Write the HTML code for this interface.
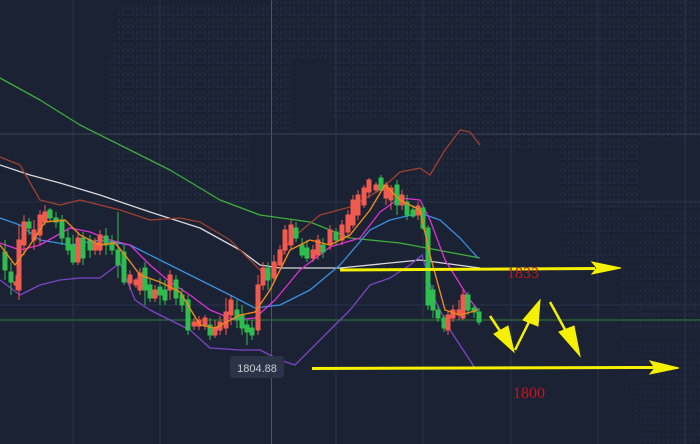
<!DOCTYPE html>
<html><head><meta charset="utf-8"><style>
html,body{margin:0;padding:0;background:#1b2234;width:700px;height:444px;overflow:hidden}
svg{display:block}
</style></head><body>
<svg width="700" height="444" viewBox="0 0 700 444" xmlns="http://www.w3.org/2000/svg">
<defs>
<pattern id="dots" width="4.5" height="6" patternUnits="userSpaceOnUse"><rect x="1" y="1" width="2" height="3" fill="#222a3e"/></pattern>
</defs>
<rect width="700" height="444" fill="#1b2234"/>
<path d="M120 5 H330 V60 H290 V130 H250 V200 H110 V60 Z" fill="url(#dots)"/>
<path d="M270 0 H700 V140 H640 V200 H560 V150 H480 V200 H400 V120 H330 V40 H270 Z" fill="url(#dots)"/>
<path d="M560 200 H700 V330 H620 V260 H560 Z" fill="url(#dots)" opacity="0.7"/>
<path d="M620 340 H700 V444 H640 Z" fill="url(#dots)" opacity="0.6"/>
<g stroke="#29334a" stroke-width="1">
<line x1="73" y1="0" x2="73" y2="444"/><line x1="160" y1="0" x2="160" y2="444"/>
<line x1="336" y1="0" x2="336" y2="444"/><line x1="423" y1="0" x2="423" y2="444"/>
<line x1="511" y1="0" x2="511" y2="444"/><line x1="598" y1="0" x2="598" y2="444"/>
<line x1="685" y1="0" x2="685" y2="444"/>
<line x1="0" y1="202" x2="700" y2="202"/><line x1="0" y1="305" x2="700" y2="305"/>
</g>
<line x1="271.5" y1="0" x2="271.5" y2="444" stroke="#4a556c"/>
<line x1="0" y1="134" x2="700" y2="134" stroke="#394358"/>
<line x1="0" y1="320" x2="700" y2="320" stroke="#2e6b3a" stroke-width="1.2"/>
<g fill="none" stroke-width="1.3" stroke-linejoin="round">
<polyline stroke="#3fae3a" points="0,78 40,100 80,125 130,150 170,170 220,200 260,215 310,222 350,238 400,243 480,258"/>
<polyline stroke="#d8d8dc" points="0,165 30,175 60,183 100,195 150,212 200,228 240,250 260,265 280,268 340,268 400,262 420,260 480,268"/>
<polyline stroke="#a0402e" points="0,157 20,165 40,200 60,205 80,200 100,205 120,210 150,220 180,218 200,222 230,240 260,270 272,275 290,240 320,215 350,207 380,190 400,172 420,168 430,175 445,150 460,130 470,132 480,145"/>
<polyline stroke="#7d45c8" points="0,280 20,295 40,285 60,280 80,278 100,278 120,263 135,300 150,310 170,320 190,330 210,348 240,350 260,350 280,360 295,365 320,340 350,310 370,285 390,278 410,265 422,255 435,300 450,330 475,368"/>
<polyline stroke="#3a8fe0" points="0,218 20,225 40,240 70,245 100,240 130,245 170,265 200,280 230,295 255,308 280,305 310,290 340,265 370,230 390,220 420,213 440,220 460,238 478,258"/>
<polyline stroke="#e030d8" points="0,243 20,250 40,245 70,228 90,232 110,240 130,245 150,265 170,282 190,295 210,310 235,320 255,318 275,300 300,270 330,247 360,238 380,212 400,198 420,200 430,220 445,260 470,300 478,310"/>
</g>
<g stroke-width="1">
<g fill="#2ebd4e" stroke="#2ebd4e">
<line x1="5" y1="240" x2="5" y2="280"/><rect x="3" y="252" width="4" height="18"/>
<line x1="11" y1="262" x2="11" y2="295"/><rect x="9" y="272" width="4" height="10"/>
<line x1="29" y1="218" x2="29" y2="235"/><rect x="27" y="222" width="4" height="6"/>
<line x1="50" y1="208" x2="50" y2="222"/><rect x="48" y="210" width="4" height="8"/>
<line x1="56" y1="212" x2="56" y2="228"/><rect x="54" y="218" width="4" height="4"/>
<line x1="62" y1="215" x2="62" y2="245"/><rect x="60" y="220" width="4" height="18"/>
<line x1="68" y1="230" x2="68" y2="255"/><rect x="66" y="238" width="4" height="12"/>
<line x1="73" y1="235" x2="73" y2="265"/><rect x="71" y="245" width="4" height="17"/>
<line x1="83" y1="232" x2="83" y2="265"/><rect x="81" y="238" width="4" height="20"/>
<line x1="90" y1="235" x2="90" y2="258"/><rect x="88" y="240" width="4" height="10"/>
<line x1="106" y1="228" x2="106" y2="255"/><rect x="104" y="236" width="4" height="9"/>
<line x1="112" y1="235" x2="112" y2="255"/><rect x="110" y="242" width="4" height="8"/>
<line x1="118" y1="212" x2="118" y2="278"/><rect x="116" y="250" width="4" height="15"/>
<line x1="124" y1="245" x2="124" y2="285"/><rect x="122" y="252" width="4" height="30"/>
<line x1="145" y1="262" x2="145" y2="305"/><rect x="143" y="268" width="4" height="22"/>
<line x1="150" y1="278" x2="150" y2="302"/><rect x="148" y="285" width="4" height="13"/>
<line x1="160" y1="278" x2="160" y2="305"/><rect x="158" y="287" width="4" height="8"/>
<line x1="165" y1="280" x2="165" y2="305"/><rect x="163" y="290" width="4" height="10"/>
<line x1="176" y1="275" x2="176" y2="305"/><rect x="174" y="280" width="4" height="18"/>
<line x1="182" y1="288" x2="182" y2="312"/><rect x="180" y="295" width="4" height="10"/>
<line x1="188" y1="295" x2="188" y2="335"/><rect x="186" y="300" width="4" height="30"/>
<line x1="210" y1="318" x2="210" y2="340"/><rect x="208" y="325" width="4" height="10"/>
<line x1="237" y1="300" x2="237" y2="328"/><rect x="235" y="310" width="4" height="10"/>
<line x1="242" y1="305" x2="242" y2="335"/><rect x="240" y="315" width="4" height="13"/>
<line x1="247" y1="320" x2="247" y2="345"/><rect x="245" y="325" width="4" height="7"/>
<line x1="252" y1="320" x2="252" y2="340"/><rect x="250" y="328" width="4" height="7"/>
<line x1="268" y1="262" x2="268" y2="290"/><rect x="266" y="268" width="4" height="12"/>
<line x1="296" y1="222" x2="296" y2="242"/><rect x="294" y="228" width="4" height="10"/>
<line x1="302" y1="238" x2="302" y2="258"/><rect x="300" y="245" width="4" height="10"/>
<line x1="307" y1="240" x2="307" y2="262"/><rect x="305" y="248" width="4" height="10"/>
<line x1="323" y1="238" x2="323" y2="258"/><rect x="321" y="245" width="4" height="7"/>
<line x1="336" y1="228" x2="336" y2="245"/><rect x="334" y="232" width="4" height="8"/>
<line x1="381" y1="175" x2="381" y2="192"/><rect x="379" y="178" width="4" height="12"/>
<line x1="397" y1="180" x2="397" y2="215"/><rect x="395" y="185" width="4" height="20"/>
<line x1="407" y1="195" x2="407" y2="220"/><rect x="405" y="202" width="4" height="13"/>
<line x1="413" y1="205" x2="413" y2="218"/><rect x="411" y="210" width="4" height="6"/>
<line x1="423" y1="205" x2="423" y2="230"/><rect x="421" y="208" width="4" height="20"/>
<line x1="428" y1="225" x2="428" y2="310"/><rect x="426" y="228" width="4" height="77"/>
<line x1="433" y1="285" x2="433" y2="318"/><rect x="431" y="290" width="4" height="20"/>
<line x1="438" y1="305" x2="438" y2="322"/><rect x="436" y="310" width="4" height="8"/>
<line x1="444" y1="315" x2="444" y2="332"/><rect x="442" y="318" width="4" height="10"/>
<line x1="468" y1="292" x2="468" y2="315"/><rect x="466" y="295" width="4" height="15"/>
<line x1="474" y1="305" x2="474" y2="318"/><rect x="472" y="308" width="4" height="4"/>
<line x1="479" y1="308" x2="479" y2="325"/><rect x="477" y="312" width="4" height="10"/>
</g>
<g fill="#f05a4f" stroke="#f05a4f">
<line x1="16" y1="275" x2="16" y2="290"/><rect x="14" y="282" width="4" height="3"/>
<line x1="19" y1="225" x2="19" y2="300"/><rect x="17" y="240" width="4" height="50"/>
<line x1="24" y1="215" x2="24" y2="255"/><rect x="22" y="222" width="4" height="23"/>
<line x1="34" y1="220" x2="34" y2="250"/><rect x="32" y="230" width="4" height="10"/>
<line x1="40" y1="210" x2="40" y2="245"/><rect x="38" y="215" width="4" height="20"/>
<line x1="45" y1="205" x2="45" y2="225"/><rect x="43" y="212" width="4" height="10"/>
<line x1="78" y1="232" x2="78" y2="265"/><rect x="76" y="238" width="4" height="24"/>
<line x1="95" y1="238" x2="95" y2="255"/><rect x="93" y="243" width="4" height="7"/>
<line x1="100" y1="230" x2="100" y2="255"/><rect x="98" y="235" width="4" height="15"/>
<line x1="130" y1="270" x2="130" y2="290"/><rect x="128" y="275" width="4" height="8"/>
<line x1="136" y1="278" x2="136" y2="288"/><rect x="134" y="280" width="4" height="5"/>
<line x1="140" y1="268" x2="140" y2="295"/><rect x="138" y="273" width="4" height="17"/>
<line x1="155" y1="285" x2="155" y2="302"/><rect x="153" y="290" width="4" height="8"/>
<line x1="170" y1="270" x2="170" y2="300"/><rect x="168" y="275" width="4" height="15"/>
<line x1="194" y1="318" x2="194" y2="330"/><rect x="192" y="322" width="4" height="4"/>
<line x1="199" y1="316" x2="199" y2="330"/><rect x="197" y="320" width="4" height="6"/>
<line x1="205" y1="315" x2="205" y2="330"/><rect x="203" y="318" width="4" height="7"/>
<line x1="215" y1="320" x2="215" y2="338"/><rect x="213" y="328" width="4" height="7"/>
<line x1="220" y1="316" x2="220" y2="335"/><rect x="218" y="322" width="4" height="8"/>
<line x1="226" y1="298" x2="226" y2="335"/><rect x="224" y="312" width="4" height="16"/>
<line x1="231" y1="295" x2="231" y2="325"/><rect x="229" y="300" width="4" height="15"/>
<line x1="258" y1="275" x2="258" y2="335"/><rect x="256" y="285" width="4" height="45"/>
<line x1="263" y1="262" x2="263" y2="290"/><rect x="261" y="268" width="4" height="17"/>
<line x1="274" y1="255" x2="274" y2="282"/><rect x="272" y="262" width="4" height="16"/>
<line x1="280" y1="245" x2="280" y2="270"/><rect x="278" y="250" width="4" height="15"/>
<line x1="285" y1="225" x2="285" y2="255"/><rect x="283" y="230" width="4" height="20"/>
<line x1="291" y1="220" x2="291" y2="250"/><rect x="289" y="225" width="4" height="20"/>
<line x1="313" y1="245" x2="313" y2="262"/><rect x="311" y="250" width="4" height="8"/>
<line x1="318" y1="235" x2="318" y2="260"/><rect x="316" y="240" width="4" height="15"/>
<line x1="330" y1="225" x2="330" y2="250"/><rect x="328" y="230" width="4" height="15"/>
<line x1="342" y1="220" x2="342" y2="245"/><rect x="340" y="225" width="4" height="15"/>
<line x1="348" y1="210" x2="348" y2="238"/><rect x="346" y="215" width="4" height="17"/>
<line x1="353" y1="195" x2="353" y2="228"/><rect x="351" y="200" width="4" height="25"/>
<line x1="358" y1="190" x2="358" y2="220"/><rect x="356" y="195" width="4" height="20"/>
<line x1="364" y1="185" x2="364" y2="208"/><rect x="362" y="188" width="4" height="17"/>
<line x1="369" y1="178" x2="369" y2="198"/><rect x="367" y="180" width="4" height="12"/>
<line x1="376" y1="182" x2="376" y2="192"/><rect x="374" y="185" width="4" height="5"/>
<line x1="386" y1="182" x2="386" y2="205"/><rect x="384" y="185" width="4" height="13"/>
<line x1="391" y1="185" x2="391" y2="210"/><rect x="389" y="188" width="4" height="12"/>
<line x1="402" y1="190" x2="402" y2="210"/><rect x="400" y="195" width="4" height="10"/>
<line x1="418" y1="202" x2="418" y2="220"/><rect x="416" y="206" width="4" height="9"/>
<line x1="448" y1="312" x2="448" y2="335"/><rect x="446" y="315" width="4" height="15"/>
<line x1="453" y1="305" x2="453" y2="322"/><rect x="451" y="310" width="4" height="8"/>
<line x1="459" y1="300" x2="459" y2="320"/><rect x="457" y="310" width="4" height="5"/>
<line x1="463" y1="290" x2="463" y2="320"/><rect x="461" y="295" width="4" height="23"/>
</g>
</g>
<polyline fill="none" stroke="#f08a1c" stroke-width="1.4" stroke-linejoin="round" points="0,245 15,265 30,245 45,222 65,220 80,235 100,245 115,243 125,255 140,275 160,282 180,292 200,325 215,328 240,315 255,312 270,290 290,250 310,240 330,245 350,235 370,210 385,185 400,200 420,210 430,255 445,310 460,315 478,310"/>
<g stroke="#f5ef00" fill="#f5ef00">
<line x1="340" y1="270" x2="595" y2="268.5" stroke-width="3"/>
<path d="M592 262 L621 268 L592 274 L597 268 Z"/>
<line x1="312" y1="368.5" x2="655" y2="367.5" stroke-width="3"/>
<path d="M650 361 L679 368 L650 374 L655 368 Z"/>
<line x1="490" y1="316" x2="506" y2="340" stroke-width="2.5"/>
<path d="M494 334 L514 352 L508 326 Z"/>
<line x1="515" y1="350" x2="534" y2="312" stroke-width="2.5"/>
<path d="M523 320 L540 300 L538 326 Z"/>
<line x1="550" y1="302" x2="568" y2="335" stroke-width="2.5"/>
<path d="M559 332 L580 356 L574 326 Z"/>
</g>
<text x="507" y="278" font-family="Liberation Serif, serif" font-size="16" fill="#c8141b">1833</text>
<text x="513" y="398" font-family="Liberation Serif, serif" font-size="16" fill="#c8141b">1800</text>
<rect x="230" y="356" width="54" height="22" rx="3" fill="#2b3447"/>
<text x="257" y="372" text-anchor="middle" font-family="Liberation Sans, sans-serif" font-size="11" fill="#c9ced8">1804.88</text>
</svg>
</body></html>
